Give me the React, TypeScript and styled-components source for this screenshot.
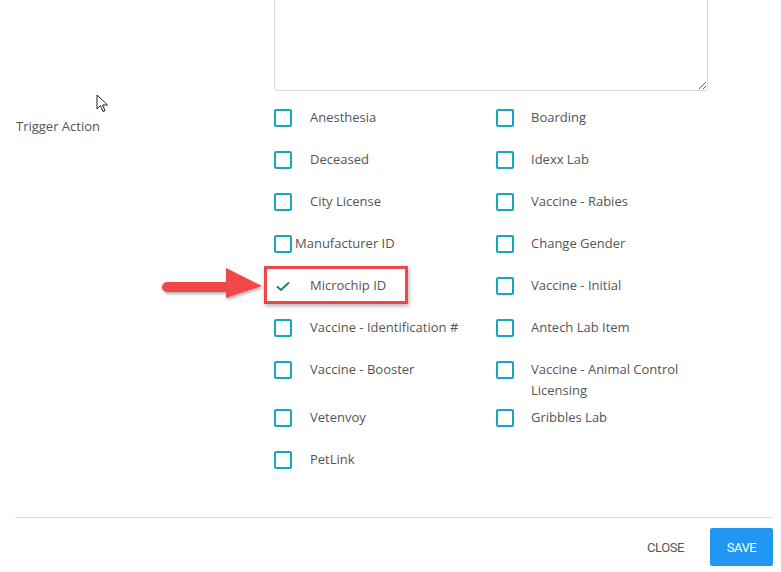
import React from "react";
import styled, { createGlobalStyle } from "styled-components";

const Global = createGlobalStyle`
  html, body { margin: 0; padding: 0; background: #fff; }
  body { font-family: "Open Sans", "Noto Sans", sans-serif; color: #555; overflow: hidden; }
`;

const Page = styled.div`
  position: relative;
  width: 781px;
  height: 572px;
  overflow: hidden;
`;

const Form = styled.div`
  margin-top: -31px;
  display: grid;
  grid-template-columns: 258px 434px;
  padding-left: 16px;
  row-gap: 16px;
`;

const Spacer = styled.div``;

const TextArea = styled.textarea`
  display: block;
  box-sizing: border-box;
  width: 434px;
  height: 122px;
  border: 1px solid #d9d9d9;
  border-radius: 3px;
  outline: none;
  font-family: inherit;
`;

const Label = styled.div`
  font-size: 13px;
  line-height: 21px;
  padding-top: 9px;
  color: #555;
`;

const Options = styled.div`
  display: grid;
  grid-template-columns: 223px 223px;
`;

const Item = styled.div<{ $col2?: boolean }>`
  position: relative;
  display: flex;
  align-items: flex-start;
  min-height: 36px;
  margin-bottom: 6px;
  margin-left: ${(p) => (p.$col2 ? "-1px" : "0")};
`;

const Box = styled.span<{ $gap: number }>`
  flex: none;
  box-sizing: border-box;
  width: 18px;
  height: 18px;
  margin-top: 2px;
  margin-right: ${(p) => p.$gap}px;
  border: 2px solid #17a7bb;
  border-radius: 2px;
`;

const Check = styled.svg`
  flex: none;
  width: 18px;
  height: 18px;
  margin-top: 2px;
  margin-right: 18px;
`;

const Text = styled.span`
  font-size: 13px;
  line-height: 21px;
  color: #555;
  max-width: 180px;
`;

const Highlight = styled.div`
  position: absolute;
  left: -10px;
  top: -9px;
  width: 144px;
  height: 38px;
  box-sizing: border-box;
  border: 3px solid #f0464a;
  box-shadow: 1px 2px 4px rgba(0, 0, 0, 0.3);
`;

const Arrow = styled.svg`
  position: absolute;
  left: 160px;
  top: 266px;
  width: 106px;
  height: 36px;
  overflow: visible;
`;

const Cursor = styled.svg`
  position: absolute;
  left: 96px;
  top: 94px;
  width: 14px;
  height: 20px;
`;

const Footer = styled.div`
  margin: 26px 8px 0 15px;
  border-top: 1px solid #ddd;
  padding-top: 10px;
  display: flex;
  justify-content: flex-end;
  align-items: center;
  gap: 26px;
`;

const Button = styled.button<{ $primary?: boolean }>`
  font-family: "Roboto", "Liberation Sans", sans-serif;
  font-size: 13px;
  letter-spacing: -0.4px;
  text-transform: uppercase;
  border: none;
  border-radius: 2px;
  height: 38px;
  padding: 0;
  width: ${(p) => (p.$primary ? "63px" : "auto")};
  background: ${(p) => (p.$primary ? "#2196f3" : "transparent")};
  color: ${(p) => (p.$primary ? "#fff" : "#555")};
  cursor: pointer;
`;

type Opt = { label: string; checked?: boolean; tight?: boolean };

const options: Opt[] = [
  { label: "Anesthesia" },
  { label: "Boarding" },
  { label: "Deceased" },
  { label: "Idexx Lab" },
  { label: "City License" },
  { label: "Vaccine - Rabies" },
  { label: "Manufacturer ID", tight: true },
  { label: "Change Gender" },
  { label: "Microchip ID", checked: true },
  { label: "Vaccine - Initial" },
  { label: "Vaccine - Identification #" },
  { label: "Antech Lab Item" },
  { label: "Vaccine - Booster" },
  { label: "Vaccine - Animal Control Licensing" },
  { label: "Vetenvoy" },
  { label: "Gribbles Lab" },
  { label: "PetLink" },
];

export default function App() {
  return (
    <Page>
      <Global />
      <Form>
        <Spacer />
        <TextArea />
        <Label>Trigger Action</Label>
        <Options>
          {options.map((o, i) => {
            const col2 = i % 2 === 1;
            return (
              <Item key={o.label} $col2={col2}>
                {o.checked ? (
                  <Check viewBox="0 0 18 18">
                    <path d="M3 9.5 L7 13 L15 5.5" fill="none" stroke="#1a7f8c" strokeWidth="2" />
                  </Check>
                ) : (
                  <Box $gap={o.tight ? 3 : col2 ? 17 : 18} />
                )}
                <Text>{o.label}</Text>
                {o.checked && <Highlight />}
              </Item>
            );
          })}
        </Options>
      </Form>
      <Footer>
        <Button>Close</Button>
        <Button $primary>Save</Button>
      </Footer>
      <Arrow viewBox="0 0 106 36">
        <defs>
          <filter id="sh" x="-10%" y="-20%" width="130%" height="160%">
            <feDropShadow dx="1" dy="2" stdDeviation="1.5" floodColor="#000" floodOpacity="0.3" />
          </filter>
        </defs>
        <g filter="url(#sh)" fill="#f0464a">
          <path d="M7 16 L66 16 L66 2 L102 20 L66 32 L66 26 L7 26 A5 5 0 0 1 7 16 Z" />
        </g>
      </Arrow>
      <Cursor viewBox="0 0 14 20">
        <path d="M1 1 L1 15 L4.5 11.5 L7 17.5 L9 16.7 L6.6 11 L11.5 11 Z" fill="#fff" stroke="#222" strokeWidth="1" strokeLinejoin="round" />
      </Cursor>
    </Page>
  );
}
